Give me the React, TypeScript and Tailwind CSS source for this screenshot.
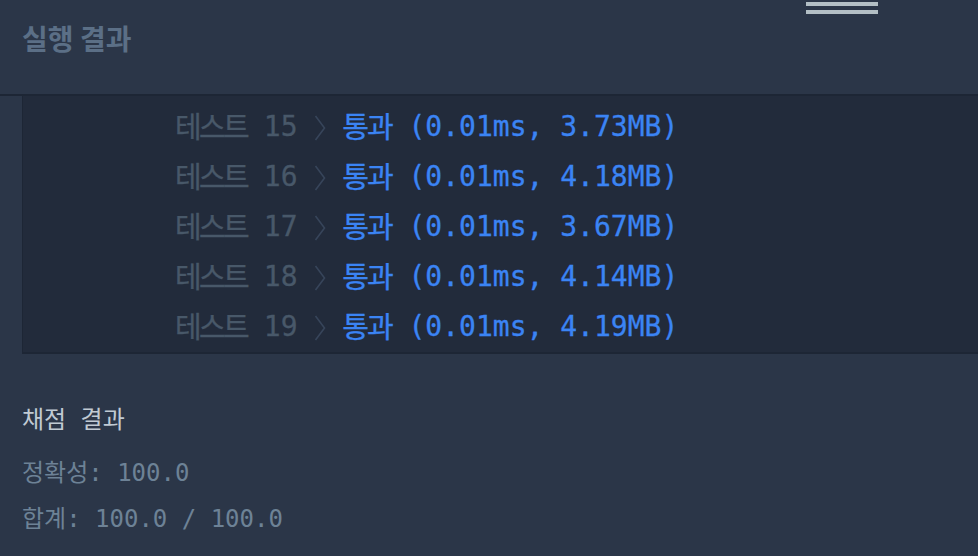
const rows = [
  { n: 15, time: '0.01ms', mem: '3.73MB' },
  { n: 16, time: '0.01ms', mem: '4.18MB' },
  { n: 17, time: '0.01ms', mem: '3.67MB' },
  { n: 18, time: '0.01ms', mem: '4.14MB' },
  { n: 19, time: '0.01ms', mem: '4.19MB' },
];

const mono = 'font-["DejaVu_Sans_Mono","Noto_Sans_CJK_KR",monospace]';

export default function App() {
  return (
    <div className="w-[978px] h-[556px] overflow-hidden bg-[#2b3648]">
      {/* header */}
      <div className="relative h-[96px] border-b-2 border-[#1d2635] pl-[22px] pt-[19px]">
        <h2 className='font-["Noto_Sans_CJK_KR",sans-serif] font-bold text-[28px] leading-[38px] text-[#5b6f86]'>
          실행 결과
        </h2>
        <div className="absolute left-[806px] top-[2px] flex flex-col gap-[4px]">
          <span className="block w-[72px] h-[4px] bg-[#b3bfc5]" />
          <span className="block w-[72px] h-[4px] bg-[#b3bfc5]" />
        </div>
      </div>

      {/* console output */}
      <div className="ml-[22px] border-l border-b-2 border-[#1d2635] bg-[#222b3b] pt-[6px] pl-[152px]">
        {rows.map((r) => (
          <div
            key={r.n}
            className={`${mono} h-[50px] leading-[50px] text-[28px] whitespace-pre [-webkit-text-stroke:0.3px_currentColor]`}
          >
            <span className="text-[#485869] text-[29px] tracking-[-2.7px] [vertical-align:-2px]">테스트</span>
            <span className="text-[#485869]"> {r.n} </span>
            <span className="inline-block w-[11px] align-middle">
              <svg width="12" height="28" viewBox="0 0 12 28" fill="none" className="block">
                <path d="M1.5 2 L10.5 14 L1.5 26" stroke="#37455a" strokeWidth="1.6" />
              </svg>
            </span>
            <span className="text-[#3b84f4]"> </span>
            <span className="text-[#3b84f4] text-[29px] tracking-[-2px] [vertical-align:-2px]">통과</span>
            <span className="text-[#3b84f4]">
              {' '}({r.time}, {r.mem})
            </span>
          </div>
        ))}
      </div>

      {/* grading result */}
      <div className={`${mono} pl-[22px] pt-[42px] text-[24px]`}>
        <div className="leading-[48px] mb-[6px] text-[#c0cad3]">채점 결과</div>
        <div className="leading-[46px] text-[#6d8296] whitespace-pre">정확성: 100.0</div>
        <div className="leading-[46px] text-[#6d8296] whitespace-pre">합계: 100.0 / 100.0</div>
      </div>
    </div>
  );
}
